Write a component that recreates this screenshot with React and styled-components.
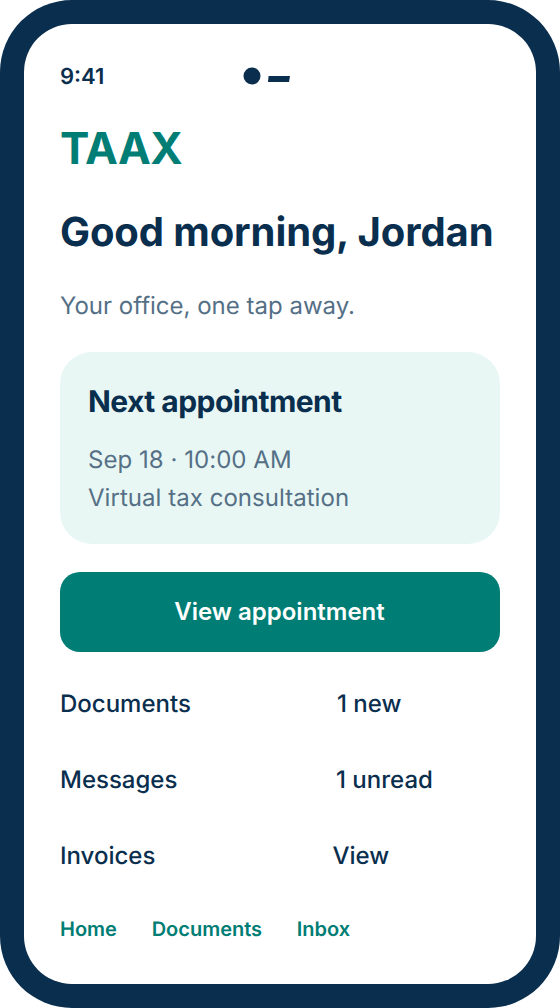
import React from "react";
import styled, { createGlobalStyle } from "styled-components";

const Global = createGlobalStyle`
  html, body { margin: 0; padding: 0; background: #fff; }
  body { font-family: Inter, "Liberation Sans", sans-serif; text-rendering: geometricPrecision; }
`;

const rows = [
  { label: "Documents", value: "1 new", inset: 277 },
  { label: "Messages", value: "1 unread", inset: 276 },
  { label: "Invoices", value: "View", inset: 272.5 },
];

const App = () => (
  <>
    <Global />
    <Phone>
      <Screen>
        <StatusBar>
          <Time>9:41</Time>
          <StatusIcons width="48" height="20" viewBox="0 0 48 20">
            <circle cx="9" cy="10" r="8.5" fill="#0a2e4d" />
            <path d="M25.6 10h21.4l-1 6H25z" fill="#0a2e4d" />
          </StatusIcons>
        </StatusBar>
        <Logo>TAAX</Logo>
        <Greeting>Good morning, Jordan</Greeting>
        <Tagline>Your office, one tap away.</Tagline>
        <Card>
          <CardTitle>Next appointment</CardTitle>
          <CardLine>Sep 18 · 10:00 AM</CardLine>
          <CardLine>Virtual tax consultation</CardLine>
        </Card>
        <PrimaryButton>View appointment</PrimaryButton>
        <List>
          {rows.map((r) => (
            <Row key={r.label}>
              <RowLabel>{r.label}</RowLabel>
              <RowValue $inset={r.inset}>{r.value}</RowValue>
            </Row>
          ))}
        </List>
        <Nav>
          <NavLink>Home</NavLink>
          <NavLink>Documents</NavLink>
          <NavLink>Inbox</NavLink>
        </Nav>
      </Screen>
    </Phone>
  </>
);

const Phone = styled.div`
  width: 560px;
  height: 1008px;
  box-sizing: border-box;
  padding: 24px;
  background: #0a2e4d;
  border-radius: 72px;
`;

const Screen = styled.div`
  height: 960px;
  box-sizing: border-box;
  padding: 36px 36px 0;
  background: #fff;
  border-radius: 48px;
  color: #0a2e4d;
`;

const StatusBar = styled.div`
  height: 32px;
  position: relative;
  display: flex;
  align-items: center;
`;

const Time = styled.span`
  font-size: 22px;
  font-weight: 600;
  line-height: 32px;
  padding-top: 1px;
`;

const StatusIcons = styled.svg`
  position: absolute;
  left: 183px;
  top: 6px;
`;

const Logo = styled.div`
  margin-top: 30px;
  font-size: 44px;
  font-weight: 700;
  line-height: 52px;
  letter-spacing: -0.5px;
  color: #007d74;
`;

const Greeting = styled.h1`
  margin: 35px 0 0;
  font-size: 40px;
  font-weight: 700;
  line-height: 46px;
  letter-spacing: -0.1px;
`;

const Tagline = styled.p`
  margin: 35px 0 0;
  font-size: 24px;
  line-height: 32px;
  color: #557086;
`;

const Card = styled.div`
  margin-top: 30px;
  height: 192px;
  box-sizing: border-box;
  padding: 29px 28px 0;
  background: #e8f7f4;
  border-radius: 32px;
`;

const CardTitle = styled.div`
  font-size: 30px;
  font-weight: 700;
  line-height: 42px;
  letter-spacing: -0.55px;
  margin-bottom: 18px;
`;

const CardLine = styled.div`
  font-size: 24px;
  line-height: 38px;
  letter-spacing: 0.04px;
  color: #557086;
`;

const PrimaryButton = styled.button`
  display: block;
  width: 100%;
  height: 80px;
  margin-top: 28px;
  padding: 0 1px 2px 0;
  border: 0;
  border-radius: 20px;
  background: #007d74;
  color: #fff;
  font-family: inherit;
  font-size: 24px;
  font-weight: 600;
`;

const List = styled.div`
  margin-top: 13px;
`;

const Row = styled.div`
  height: 76px;
  display: flex;
  align-items: center;
  font-size: 24px;
  font-weight: 500;
`;

const RowLabel = styled.span`
  width: 0;
  white-space: nowrap;
`;

const RowValue = styled.span`
  margin-left: ${(p) => p.$inset}px;
`;

const Nav = styled.nav`
  display: flex;
  gap: 34.7px;
  margin-top: 24px;
  font-size: 20px;
  font-weight: 600;
  color: #007d74;
`;

const NavLink = styled.span``;

export default App;
